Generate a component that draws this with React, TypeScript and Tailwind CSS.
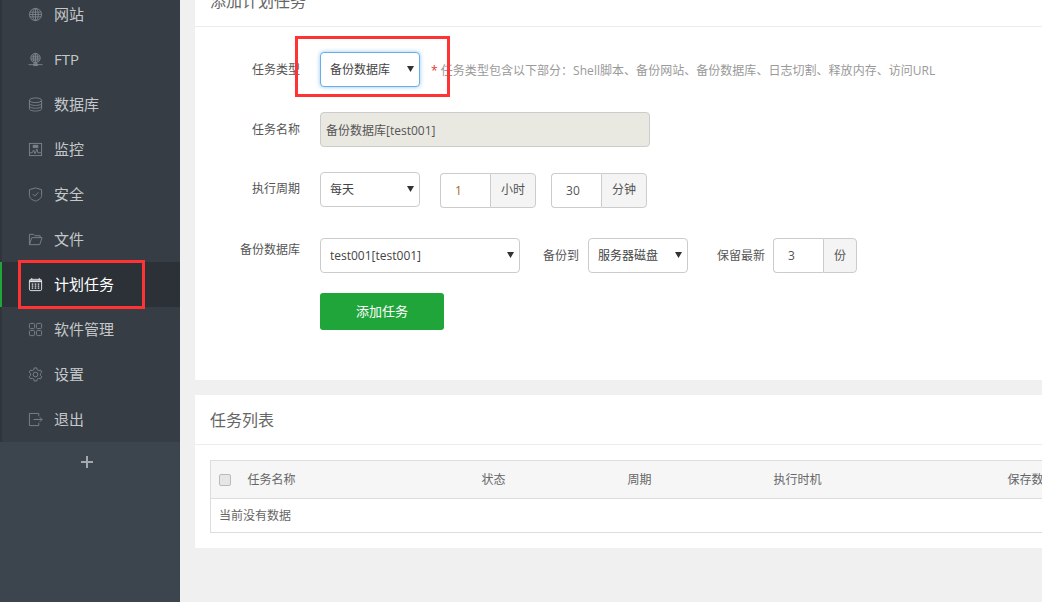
import type { ReactNode } from "react";

const font = "font-['Open_Sans','Noto_Sans_CJK_SC',sans-serif]";

function Icon({ children, active }: { children: ReactNode; active?: boolean }) {
  return (
    <svg
      viewBox="0 0 16 16"
      fill="none"
      stroke="currentColor"
      strokeWidth="1"
      className={`h-[15px] w-[15px] shrink-0 ${active ? "text-[#e4e6e8]" : "text-[#7d8388]"}`}
    >
      {children}
    </svg>
  );
}

const icons: Record<string, ReactNode> = {
  globe: (
    <>
      <circle cx="8" cy="8" r="6.5" />
      <ellipse cx="8" cy="8" rx="3" ry="6.5" />
      <path d="M8 1.5v13M2 5.5h12M1.5 8h13M2 10.5h12" />
    </>
  ),
  ftp: (
    <>
      <circle cx="8" cy="6.5" r="5" />
      <ellipse cx="8" cy="6.5" rx="2.2" ry="5" />
      <path d="M8 1.5v10M3.5 4.5h9M3 6.5h10M3.5 8.5h9M0.5 13.5h15" />
      <path d="M6 12.5h4v2H6z" fill="currentColor" />
    </>
  ),
  database: (
    <>
      <ellipse cx="8" cy="3.5" rx="6.5" ry="2.5" />
      <path d="M1.5 3.5v9c0 1.4 2.9 2.5 6.5 2.5s6.5-1.1 6.5-2.5v-9" />
      <path d="M1.5 6.5c0 1.4 2.9 2.5 6.5 2.5s6.5-1.1 6.5-2.5M1.5 9.5c0 1.4 2.9 2.5 6.5 2.5s6.5-1.1 6.5-2.5" />
    </>
  ),
  monitor: (
    <>
      <rect x="1.5" y="1.5" width="13" height="13" />
      <path d="M1.5 11.5h3l1.5-3 1.5 4 2-5 1 4h3.5" />
      <path d="M5.5 3.5h5v2.5h-5z" fill="currentColor" />
    </>
  ),
  shield: (
    <>
      <path d="M8 1l6.5 1.8v6.4c0 2.6-3 4.7-6.5 5.8-3.5-1.1-6.5-3.2-6.5-5.8V2.8z" />
      <path d="M5 7.5l2.2 2.2L11 5.8" />
    </>
  ),
  folder: (
    <>
      <path d="M1.5 13.5v-11h4.5l1.5 1.5h5.5v2" />
      <path d="M1.5 13.5l2.5-7.5h11l-2.5 7.5z" />
    </>
  ),
  calendar: (
    <>
      <rect x="1.5" y="2.5" width="13" height="12" rx="1.5" />
      <path d="M1.5 4.5h13" strokeWidth="2" />
      <path d="M4 1v2.5M12 1v2.5" />
      <path
        d="M4 7.5h1.6M7.2 7.5h1.6M10.4 7.5H12M4 9.7h1.6M7.2 9.7h1.6M10.4 9.7H12M4 11.9h1.6M7.2 11.9h1.6M10.4 11.9H12"
        strokeWidth="1.4"
      />
    </>
  ),
  grid: (
    <>
      <rect x="1.5" y="1.5" width="5.5" height="5.5" rx="1.2" />
      <rect x="9" y="1.5" width="5.5" height="5.5" rx="1.2" />
      <rect x="1.5" y="9" width="5.5" height="5.5" rx="1.2" />
      <rect x="9" y="9" width="5.5" height="5.5" rx="1.2" />
    </>
  ),
  gear: (
    <>
      <path d="M6.6 1h2.8l.4 2 1.6.9 1.9-.7 1.4 2.4-1.5 1.4v1.9l1.5 1.4-1.4 2.4-1.9-.7-1.6.9-.4 2H6.6l-.4-2-1.6-.9-1.9.7-1.4-2.4 1.5-1.4V7L1.3 5.6l1.4-2.4 1.9.7 1.6-.9z" />
      <circle cx="8" cy="8" r="2.5" />
    </>
  ),
  logout: (
    <>
      <path d="M11.5 4.5v-3h-10v13h10v-3" />
      <path d="M6 8h9M12.5 5.5L15 8l-2.5 2.5" />
    </>
  ),
};

const menu = [
  { label: "网站", icon: "globe" },
  { label: "FTP", icon: "ftp" },
  { label: "数据库", icon: "database" },
  { label: "监控", icon: "monitor" },
  { label: "安全", icon: "shield" },
  { label: "文件", icon: "folder" },
  { label: "计划任务", icon: "calendar", active: true },
  { label: "软件管理", icon: "grid" },
  { label: "设置", icon: "gear" },
  { label: "退出", icon: "logout" },
];

function Select({ value, width, focus }: { value: string; width: string; focus?: boolean }) {
  return (
    <div className={`relative shrink-0 ${width}`}>
      <select
        defaultValue={value}
        className={`block h-[35px] w-full appearance-none rounded-[4px] border bg-white pl-[9px] pt-[1px] text-xs text-[#444] outline-none ${
          focus ? "border-[#66afe9] shadow-[0_0_4px_rgba(102,175,233,0.7)]" : "border-[#ccc]"
        }`}
      >
        <option>{value}</option>
      </select>
      <svg viewBox="0 0 7 6" className="pointer-events-none absolute right-[6px] top-[14px] h-[6px] w-[7px] text-[#333]">
        <path d="M0 0h7L3.5 6z" fill="currentColor" />
      </svg>
    </div>
  );
}

function UnitInput({ value, unit, text }: { value: string; unit: string; text?: string }) {
  return (
    <div className="flex h-[35px] shrink-0">
      <input
        readOnly
        value={value}
        className={`h-full w-[50px] rounded-l-[4px] border border-r-0 border-[#ccc] bg-white pl-[14px] text-xs outline-none ${text ?? "text-[#555]"}`}
      />
      <span className="flex h-full items-center rounded-r-[4px] border border-[#ccc] bg-[#f4f4f4] px-[10px] text-xs text-[#555]">
        {unit}
      </span>
    </div>
  );
}

function Label({ children, offset }: { children: ReactNode; offset?: string }) {
  return <span className={`w-[125px] shrink-0 pr-[20px] text-right text-xs text-[#555] ${offset ?? ""}`}>{children}</span>;
}

export default function App() {
  return (
    <div className={`relative flex h-[602px] w-[1042px] overflow-hidden bg-[#f0f0f0] ${font}`}>
      {/* Sidebar */}
      <aside className="h-full w-[180px] shrink-0 bg-[#3c444d]">
        <ul className="-mt-[8px] bg-[#363d44]">
          {menu.map((m) => (
            <li
              key={m.label}
              className={`flex h-[45px] items-center gap-[11px] border-l-2 pl-[26px] text-[15px] ${
                m.active
                  ? "border-[#20a53a] bg-[#2c3138] text-white"
                  : "border-[#30353b] text-[#c4c8cb]"
              }`}
            >
              <Icon active={m.active}>{icons[m.icon]}</Icon>
              {m.label}
            </li>
          ))}
        </ul>
        <div className="mt-[13px] flex justify-center pr-[6px]">
          <svg viewBox="0 0 14 14" className="h-[14px] w-[14px] text-[#a5a9ad]">
            <path d="M6 1h2v5h5v2H8v5H6V8H1V6h5z" fill="currentColor" />
          </svg>
        </div>
      </aside>

      {/* Main column, scrolled so the first card's title is cut off */}
      <main className="-mt-[24px] ml-[15px] min-w-0 flex-1 overflow-hidden">
        <section className="h-[404px] bg-white">
          <h2 className="h-[51px] border-b border-[#ececec] pl-[15px] pt-[13px] text-base text-[#666]">添加计划任务</h2>

          <div className="flex flex-col pt-[25px]">
            <div className="flex h-[35px] items-center">
              <Label>任务类型</Label>
              <Select value="备份数据库" width="w-[100px]" focus />
              <span className="ml-[11px] mt-[2px] text-xs tracking-[0.03px] text-[#999]">
                <span className="text-[#e5342f]">*</span> 任务类型包含以下部分：Shell脚本、备份网站、备份数据库、日志切割、释放内存、访问URL
              </span>
            </div>

            <div className="mt-[25px] flex h-[35px] items-center">
              <Label>任务名称</Label>
              <input
                readOnly
                value="备份数据库[test001]"
                className="h-full w-[330px] rounded-[4px] border border-[#ccc] bg-[#e9e8e1] pl-[5px] text-xs text-[#555] outline-none"
              />
            </div>

            <div className="mt-[25px] flex h-[35px] items-center">
              <Label offset="-mt-[1px]">执行周期</Label>
              <Select value="每天" width="w-[100px]" />
              <div className="ml-[20px] mt-[1px] flex gap-[15px]">
                <UnitInput value="1" unit="小时" text="text-[#a9692c]" />
                <UnitInput value="30" unit="分钟" />
              </div>
            </div>

            <div className="mt-[31px] flex h-[35px] items-center">
              <Label offset="-mt-[11px]">备份数据库</Label>
              <Select value="test001[test001]" width="w-[200px]" />
              <span className="ml-[23px] mr-[9px] text-xs text-[#555]">备份到</span>
              <Select value="服务器磁盘" width="w-[100px]" />
              <span className="ml-[29px] mr-[8px] text-xs text-[#555]">保留最新</span>
              <UnitInput value="3" unit="份" />
            </div>

            <button className="ml-[125px] mt-[20px] h-[37px] w-[124px] rounded-[3px] bg-[#20a53a] pt-[1px] text-[13px] text-white">
              添加任务
            </button>
          </div>
        </section>

        <section className="mt-[15px] h-[153px] overflow-hidden bg-white">
          <h2 className="h-[50px] border-b border-[#ececec] pl-[15px] pt-[13px] text-base text-[#666]">任务列表</h2>
          <div className="pl-[15px] pt-[15px]">
            <table className="w-[1000px] table-fixed border-collapse text-xs text-[#666]">
              <thead>
                <tr className="h-[38px] border border-[#ddd] bg-[#f6f6f6] text-left font-normal">
                  <th className="w-[37px] pl-[8px] font-normal">
                    <input type="checkbox" className="block h-[12px] w-[12px] appearance-none rounded-[2px] border border-[#bbb] bg-[#e6e6e6]" />
                  </th>
                  <th className="w-[234px] font-normal">任务名称</th>
                  <th className="w-[146px] font-normal">状态</th>
                  <th className="w-[146px] font-normal">周期</th>
                  <th className="w-[234px] font-normal">执行时机</th>
                  <th className="font-normal">保存数量</th>
                </tr>
              </thead>
              <tbody>
                <tr className="h-[34px] border border-[#ddd]">
                  <td colSpan={6} className="pl-[8px] text-[#666]">当前没有数据</td>
                </tr>
              </tbody>
            </table>
          </div>
        </section>
      </main>

      {/* Red annotation boxes drawn over the screenshot */}
      <div className="absolute left-[295px] top-[36px] h-[61px] w-[155px] border-[3px] border-[#ff3333]" />
      <div className="absolute left-[18px] top-[260px] h-[49px] w-[127px] border-[3px] border-[#ff3333]" />
    </div>
  );
}
